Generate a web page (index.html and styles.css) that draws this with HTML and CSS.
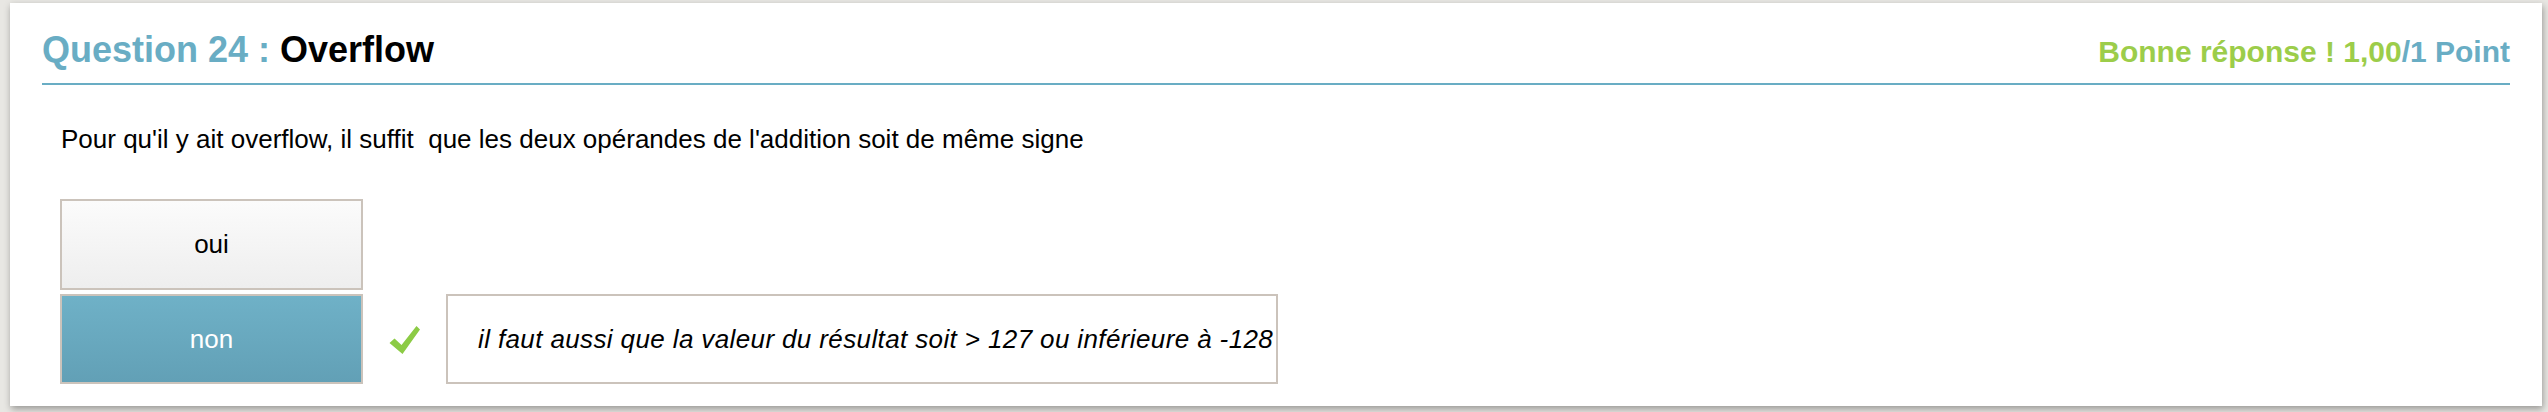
FILE: index.html
```html
<!DOCTYPE html>
<html lang="fr">
<head>
<meta charset="utf-8">
<title>Question 24</title>
<link rel="stylesheet" href="styles.css">
</head>
<body>
<div class="card">
  <div class="header">
    <h1 class="title"><span class="qnum">Question 24 :</span> Overflow</h1>
    <div class="score"><span class="ok">Bonne réponse ! 1,00</span>/1 Point</div>
  </div>
  <p class="question">Pour qu'il y ait overflow, il suffit&nbsp; que les deux opérandes de l'addition soit de même signe</p>
  <div class="answers">
    <div class="row">
      <div class="choice">oui</div>
    </div>
    <div class="row">
      <div class="choice selected">non</div>
      <svg class="check" width="32" height="30" viewBox="0 0 32 30" aria-hidden="true">
        <path d="M0.5 18 L5.5 13.5 L12.5 20 L27.5 1 L31 4.5 L13.5 29 Z" fill="#8ccb45"/>
      </svg>
      <div class="feedback">il faut aussi que la valeur du résultat soit &gt; 127 ou inférieure à -128</div>
    </div>
  </div>
</div>
</body>
</html>
```

FILE: styles.css
```css
html, body {
  margin: 0;
  padding: 0;
}
body {
  background: #e8e7e3;
  font-family: "Liberation Sans", Arial, sans-serif;
  width: 2548px;
  height: 412px;
  overflow: hidden;
}
.card {
  margin: 3px 6px 0 10px;
  height: 403px;
  box-sizing: border-box;
  background: #ffffff;
  box-shadow: 1px 3px 7px rgba(0, 0, 0, 0.35);
  padding: 26px 32px 0 32px;
}
.header {
  display: flex;
  justify-content: space-between;
  align-items: baseline;
  padding-bottom: 10px;
  border-bottom: 2px solid #69adc4;
}
.title {
  margin: 0;
  font-size: 36px;
  line-height: 42px;
  font-weight: bold;
  color: #000;
}
.qnum {
  color: #69adc4;
}
.score {
  font-size: 30px;
  font-weight: bold;
  line-height: 42px;
  color: #69adc4;
}
.ok {
  color: #9ccd4a;
}
.question {
  margin: 39px 0 0 19px;
  font-size: 26px;
  line-height: 30px;
  color: #000;
}
.answers {
  margin: 45px 0 0 18px;
  display: flex;
  flex-direction: column;
  gap: 4px;
}
.row {
  display: flex;
  align-items: center;
}
.choice {
  width: 303px;
  height: 91px;
  box-sizing: border-box;
  border: 2px solid #cbc3bb;
  background: linear-gradient(#fbfbfb, #eeeeee);
  display: flex;
  align-items: center;
  justify-content: center;
  font-size: 26px;
  color: #000;
}
.choice.selected {
  height: 90px;
  background: linear-gradient(#6fb1c7, #62a0b6);
  color: #ffffff;
}
.check {
  margin-left: 26px;
  margin-top: 2px;
  filter: blur(0.7px);
}
.feedback {
  margin-left: 25px;
  width: 832px;
  height: 90px;
  box-sizing: border-box;
  border: 2px solid #cbc3bb;
  background: #ffffff;
  display: flex;
  align-items: center;
  padding-left: 30px;
  font-size: 26px;
  letter-spacing: 0.38px;
  font-style: italic;
  color: #000;
}
```
